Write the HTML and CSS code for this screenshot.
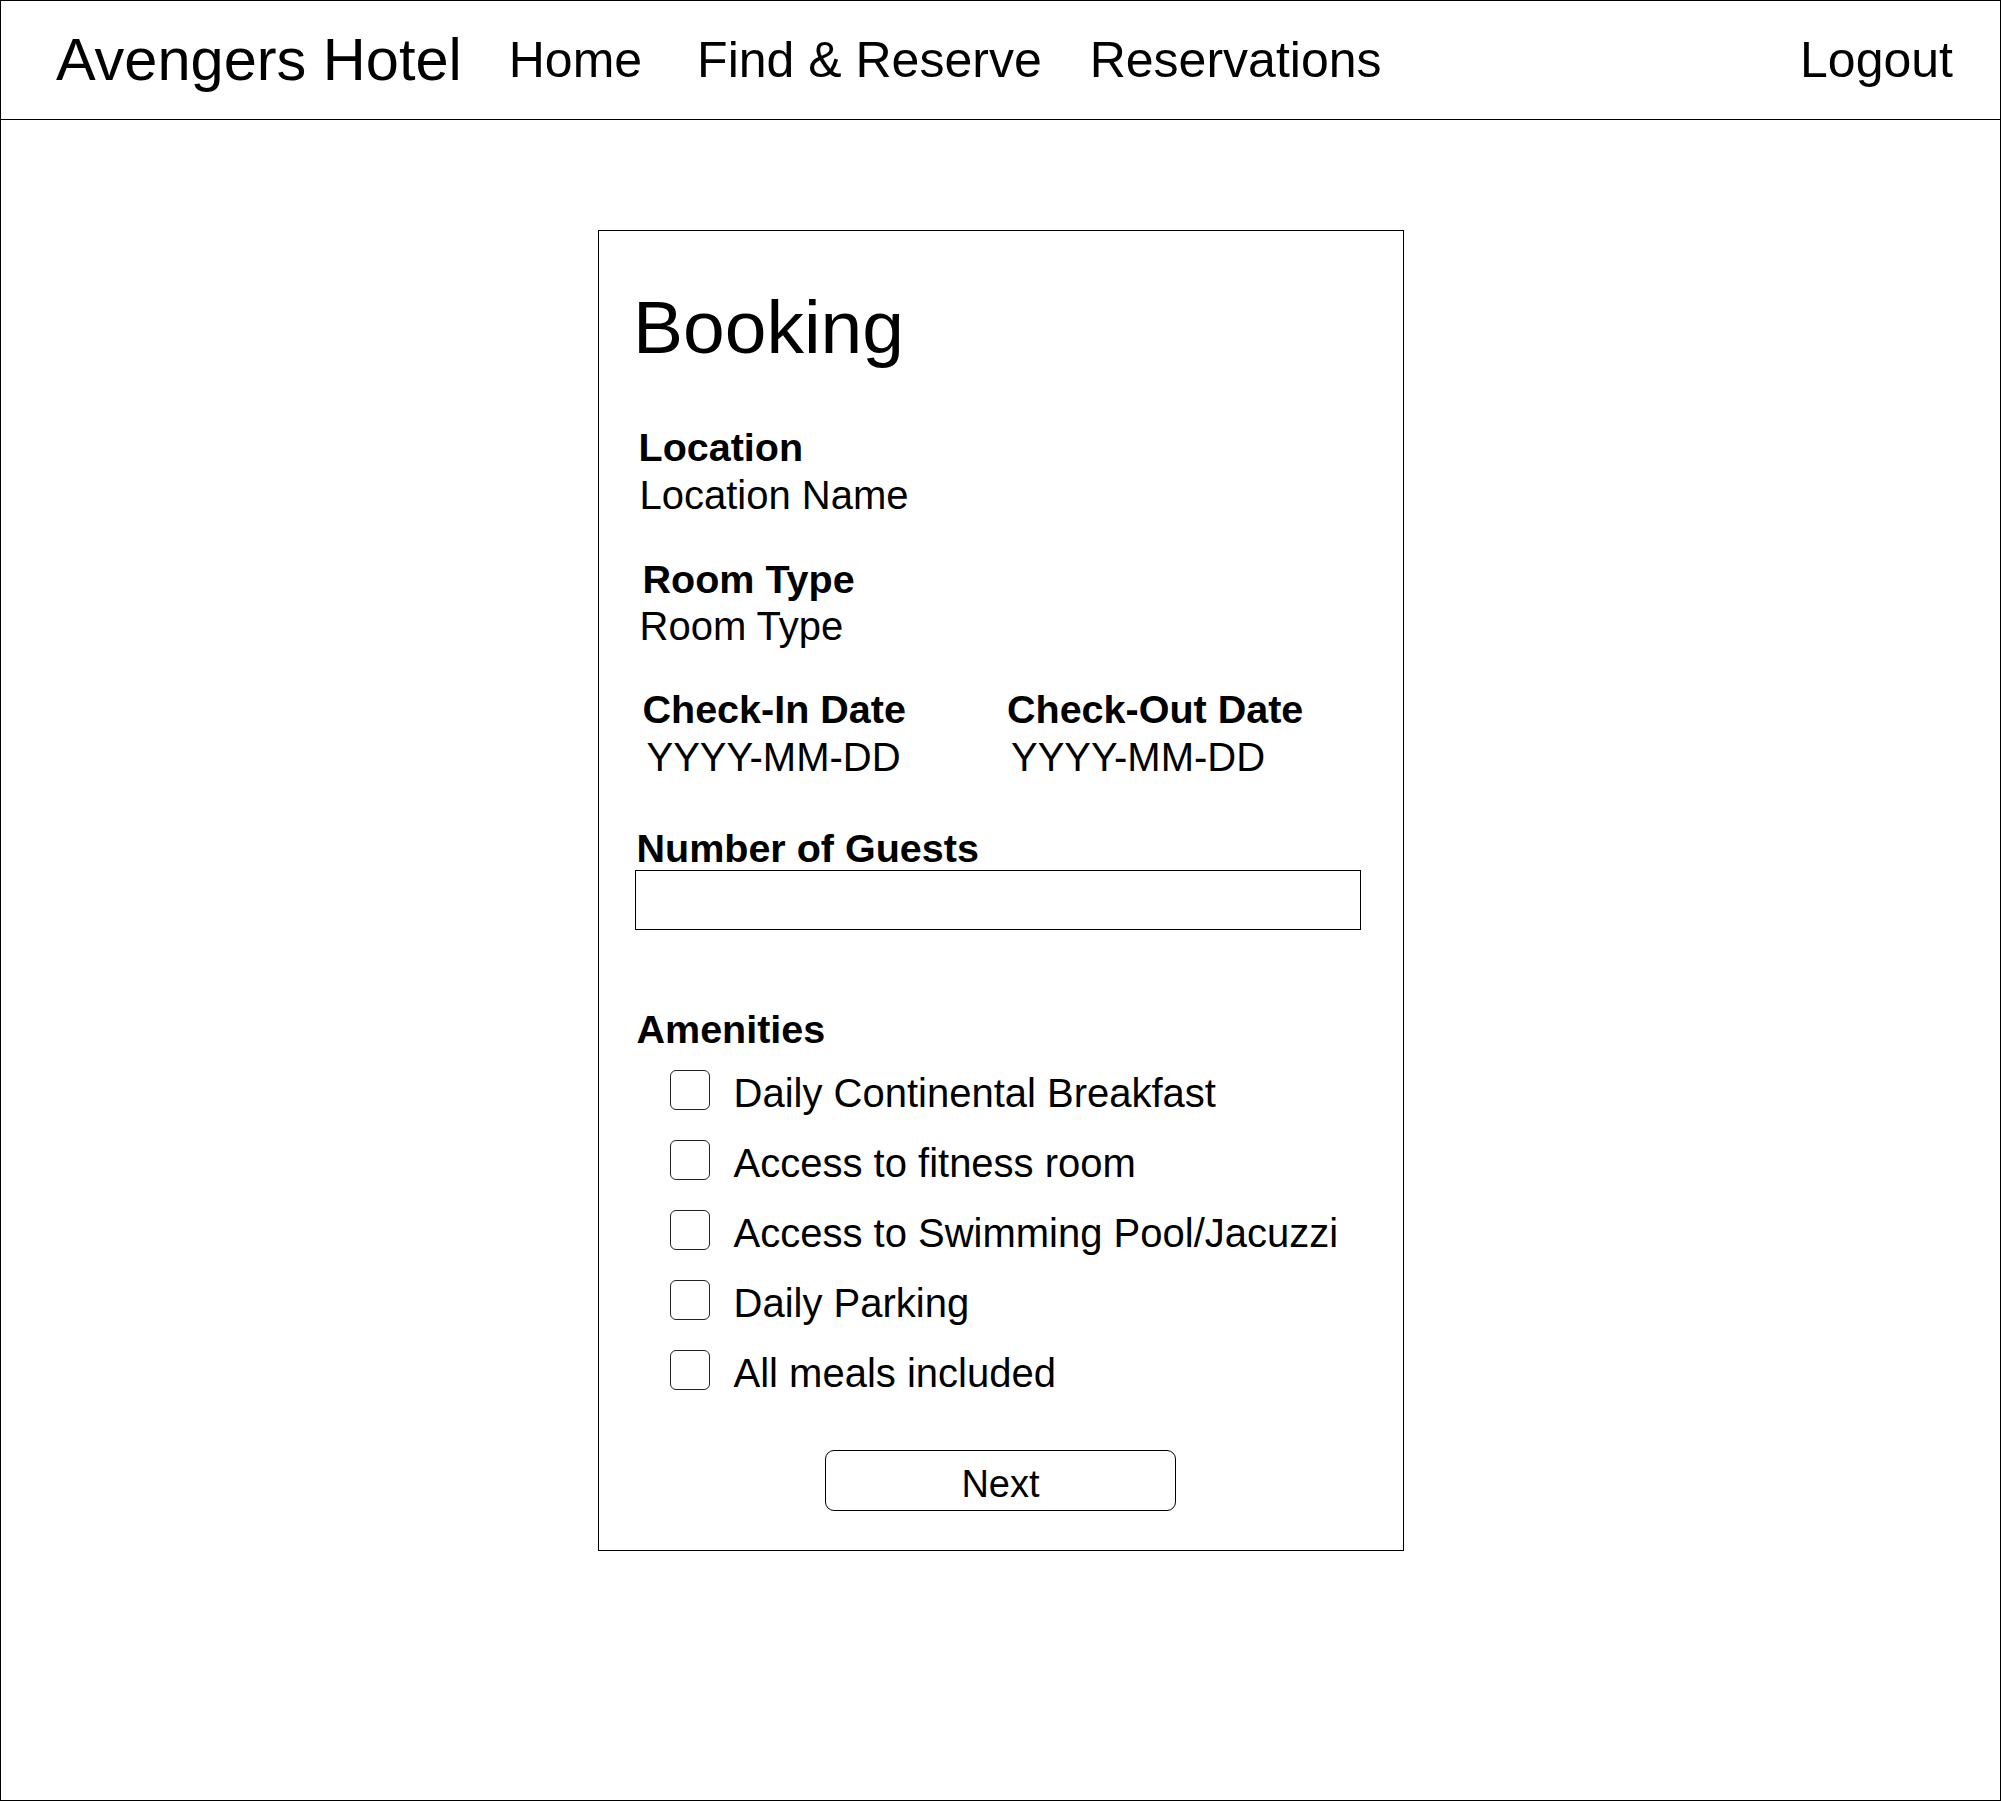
FILE: index.html
```html
<!DOCTYPE html>
<html lang="en">
<head>
<meta charset="utf-8">
<title>Avengers Hotel – Booking</title>
<link rel="stylesheet" href="styles.css">
</head>
<body>
<div class="frame">
  <header class="topbar">
    <div class="brand">Avengers Hotel</div>
    <nav class="nav">
      <a class="nav-link nav-home" href="#">Home</a>
      <a class="nav-link nav-find" href="#">Find &amp; Reserve</a>
      <a class="nav-link nav-res" href="#">Reservations</a>
    </nav>
    <a class="nav-link logout" href="#">Logout</a>
  </header>

  <main class="content">
    <section class="card">
      <h1 class="title">Booking</h1>

      <div class="field field-location">
        <div class="label">Location</div>
        <div class="value">Location Name</div>
      </div>

      <div class="field field-room">
        <div class="label">Room Type</div>
        <div class="value">Room Type</div>
      </div>

      <div class="field dates">
        <div class="date-col">
          <div class="label">Check-In Date</div>
          <div class="value">YYYY-MM-DD</div>
        </div>
        <div class="date-col">
          <div class="label">Check-Out Date</div>
          <div class="value">YYYY-MM-DD</div>
        </div>
      </div>

      <div class="field guests">
        <div class="label">Number of Guests</div>
        <input class="guests-input" type="text" aria-label="Number of Guests">
      </div>

      <div class="amenities">
        <div class="label">Amenities</div>
        <ul class="amenity-list">
          <li class="amenity"><input class="check" type="checkbox"><span class="amenity-text">Daily Continental Breakfast</span></li>
          <li class="amenity"><input class="check" type="checkbox"><span class="amenity-text">Access to fitness room</span></li>
          <li class="amenity"><input class="check" type="checkbox"><span class="amenity-text">Access to Swimming Pool/Jacuzzi</span></li>
          <li class="amenity"><input class="check" type="checkbox"><span class="amenity-text">Daily Parking</span></li>
          <li class="amenity"><input class="check" type="checkbox"><span class="amenity-text">All meals included</span></li>
        </ul>
      </div>

      <button class="next-btn" type="button">Next</button>
    </section>
  </main>
</div>
</body>
</html>
```

FILE: styles.css
```css
* {
  box-sizing: border-box;
}

body {
  margin: 0;
  background: #fff;
  color: #000;
  font-family: "Liberation Sans", Arial, Helvetica, sans-serif;
}

.frame {
  width: 2001px;
  height: 1801px;
  border: 1px solid #000;
  background: #fff;
}

/* ---------- top bar ---------- */
.topbar {
  height: 119px;
  border-bottom: 1px solid #000;
  display: flex;
  align-items: center;
  padding: 0 47px 0 55px;
}

.brand {
  font-size: 59.5px;
  line-height: 1;
  white-space: nowrap;
  margin-right: 47px;
}

.nav {
  display: flex;
  align-items: center;
}

.nav-link {
  font-size: 50px;
  line-height: 1;
  color: #000;
  text-decoration: none;
  white-space: nowrap;
}

.nav-find {
  margin-left: 55px;
}

.nav-res {
  margin-left: 48px;
}

.logout {
  margin-left: auto;
}

/* ---------- card ---------- */
.content {
  padding-top: 110px;
}

.card {
  width: 806px;
  margin: 0 auto;
  border: 1px solid #000;
  padding: 59px 38px 39px;
  display: flex;
  flex-direction: column;
}

.title {
  margin: 0 0 0 -3.5px;
  font-size: 75px;
  font-weight: normal;
  line-height: 1;
}

.label {
  font-size: 39.5px;
  font-weight: bold;
  line-height: 1;
  white-space: nowrap;
}

.value {
  font-size: 40px;
  line-height: 1;
  margin-top: 7px;
  margin-left: 3px;
  white-space: nowrap;
}

.field-location {
  margin-top: 63px;
}

.field-location .label {
  margin-left: 2px;
}

.field-room {
  margin-top: 45px;
}

.field-room .label {
  margin-left: 6px;
}

.dates {
  margin-top: 44px;
  display: flex;
}

.date-col:first-child {
  width: 364.5px;
}

.dates .label {
  margin-left: 6px;
}

.dates .value {
  margin-left: 10px;
}

.guests {
  margin-top: 52px;
}

.guests-input {
  display: block;
  width: 726px;
  height: 60px;
  margin: 2px 0 0 -2px;
  padding: 0;
  border: 1px solid #000;
  border-radius: 0;
  background: #fff;
  font: inherit;
}

/* ---------- amenities ---------- */
.amenities {
  margin-top: 80px;
}

.amenity-list {
  list-style: none;
  margin: 20.5px 0 0;
  padding: 0 0 0 33px;
  display: flex;
  flex-direction: column;
  gap: 27px;
}

.amenity {
  display: flex;
  align-items: flex-start;
  height: 43px;
}

.check {
  appearance: none;
  -webkit-appearance: none;
  margin: 0;
  width: 40px;
  height: 40px;
  border: 1px solid #222;
  border-radius: 6px;
  background: #fff;
  flex: none;
}

.amenity-text {
  font-size: 40px;
  line-height: 1;
  padding-top: 3px;
  margin-left: 24px;
  white-space: nowrap;
}

/* ---------- button ---------- */
.next-btn {
  align-self: center;
  margin-top: 57px;
  width: 351px;
  height: 61px;
  border: 1px solid #000;
  border-radius: 9px;
  background: #fff;
  color: #000;
  font-family: inherit;
  font-size: 38px;
  line-height: 1;
  padding: 14px 0 0;
  display: flex;
  justify-content: center;
  align-items: flex-start;
}
```
